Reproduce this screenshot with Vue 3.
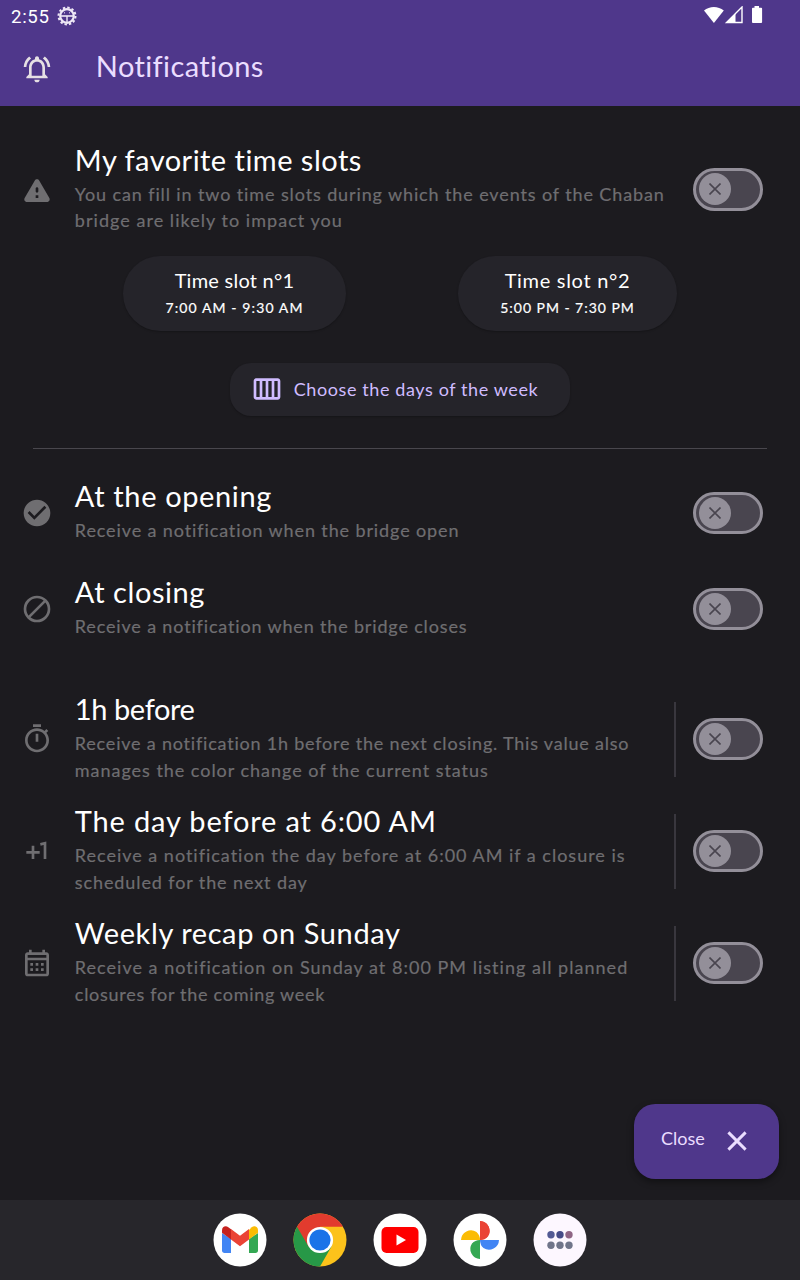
<script setup>
// Spreads the letters of a label so that it spans the given width.
const vSpan = {
  mounted(el, { value }) {
    const natural = el.getBoundingClientRect().width
    const count = el.textContent.length
    el.style.letterSpacing = `${(value - natural) / (count - 1)}px`
  },
}

const slots = [
  { name: 'Time slot n°1', nameW: 119.5, hours: '7:00 AM - 9:30 AM', hoursW: 137, size: 'wide' },
  { name: 'Time slot n°2', nameW: 125, hours: '5:00 PM - 7:30 PM', hoursW: 133.5, size: 'narrow' },
]

const favorite = {
  icon: 'warning', kind: 'favorite', title: 'My favorite time slots', w: 287,
  lines: [
    { t: 'You can fill in two time slots during which the events of the Chaban', w: 589 },
    { t: 'bridge are likely to impact you', w: 267 },
  ],
}
const rows = [
  { icon: 'check', kind: 'short', title: 'At the opening', w: 196.5, lines: [{ t: 'Receive a notification when the bridge open', w: 384 }] },
  { icon: 'block', kind: 'short', title: 'At closing', w: 129.5, lines: [{ t: 'Receive a notification when the bridge closes', w: 392 }] },
  {
    icon: 'timer', kind: 'tall first', bar: true, title: '1h before', w: 120,
    lines: [
      { t: 'Receive a notification 1h before the next closing. This value also', w: 554 },
      { t: 'manages the color change of the current status', w: 413 },
    ],
  },
  {
    icon: 'plus', kind: 'tall', bar: true, title: 'The day before at 6:00 AM', w: 361,
    lines: [
      { t: 'Receive a notification the day before at 6:00 AM if a closure is', w: 550 },
      { t: 'scheduled for the next day', w: 232 },
    ],
  },
  {
    icon: 'calendar', kind: 'tall', bar: true, title: 'Weekly recap on Sunday', w: 325,
    lines: [
      { t: 'Receive a notification on Sunday at 8:00 PM listing all planned', w: 553 },
      { t: 'closures for the coming week', w: 249.5 },
    ],
  },
]
const groups = [[favorite], rows]
</script>

<template>
  <div class="screen">
    <header class="header">
      <div class="status">
        <div class="status-left">
          <span v-span="38" class="clock">2:55</span>
          <svg class="gear" viewBox="0 0 20 20">
            <circle cx="10" cy="10" r="8.5" fill="none" stroke="#eee8f6" stroke-width="2" stroke-dasharray="2.4 2.05" />
            <circle cx="10" cy="10" r="6.8" fill="none" stroke="#eee8f6" stroke-width="2.2" />
            <path d="M4 10h12" stroke="#eee8f6" stroke-width="1.6" fill="none" />
            <path d="M10 10v6" stroke="#eee8f6" stroke-width="1.4" fill="none" />
            <path d="M7.500 6v1.500M12.500 6v1.500" stroke="#bcaedb" stroke-width="1" />
          </svg>
        </div>
        <svg class="signals" viewBox="0 0 60 20">
          <path d="M0 4.600C5.500-.2 14.200-.2 19.800 4.600L9.900 17z" fill="#fff" />
          <path d="M38 1v15.500H22.500z" fill="none" stroke="#fff" stroke-width="1.400" />
          <path d="M31 8v8.800h-8.800z" fill="#fff" />
          <path d="M31 8v8.800" stroke="#fff" stroke-width="1" />
          <path d="M50.500 0h4.500v1.700h2.200c.6 0 .9.4.9.9v13.500c0 .6-.4.900-.9.900h-8.300c-.6 0-.9-.4-.9-.9V2.600c0-.6.4-.9.9-.9h1.600z" fill="#fff" />
        </svg>
      </div>
      <div class="appbar">
        <svg class="icon bell" viewBox="0 0 24 24">
          <path d="M12 22c1.100 0 2-.9 2-2h-4c0 1.100.9 2 2 2zm6-6v-5c0-3.070-1.630-5.640-4.500-6.320V4c0-.83-.67-1.500-1.500-1.500s-1.500.67-1.500 1.500v.68C7.640 5.360 6 7.920 6 11v5l-2 2v1h16v-1l-2-2zm-2 1H8v-6c0-2.480 1.510-4.500 4-4.500s4 2.020 4 4.500v6zM7.580 4.080L6.150 2.650C3.750 4.480 2.170 7.300 2.030 10.500h2c.15-2.650 1.510-4.970 3.550-6.420zm12.390 6.420h2c-.15-3.200-1.730-6.020-4.120-7.850l-1.420 1.430c2.020 1.450 3.390 3.770 3.540 6.420z" />
        </svg>
        <h1><span v-span="168">Notifications</span></h1>
      </div>
    </header>

    <main class="content">
      <template v-for="(group, g) in groups" :key="g">
        <section v-for="row in group" :key="row.title" class="row" :class="row.kind">
          <svg class="icon" viewBox="0 0 24 24">
            <path v-if="row.icon === 'warning'" d="M4.470 21h15.060c1.540 0 2.500-1.670 1.730-3L13.730 4.990c-.77-1.330-2.690-1.330-3.460 0L2.740 18c-.77 1.330.19 3 1.730 3zM12 14c-.55 0-1-.45-1-1v-2c0-.55.45-1 1-1s1 .45 1 1v2c0 .55-.45 1-1 1zm1 4h-2v-2h2v2z" />
            <path v-else-if="row.icon === 'check'" d="M12 2C6.480 2 2 6.480 2 12s4.480 10 10 10 10-4.480 10-10S17.520 2 12 2zm-2 15l-5-5 1.410-1.410L10 14.170l7.590-7.590L19 8l-9 9z" />
            <g v-else-if="row.icon === 'block'" class="line">
              <circle cx="12" cy="12" r="9" />
              <path d="M5.700 18.300L18.300 5.700" />
            </g>
            <path v-else-if="row.icon === 'timer'" d="M15 1H9v2h6V1zm-4 13h2V8h-2v6zm8.030-6.610l1.420-1.420c-.43-.51-.9-.99-1.410-1.410l-1.420 1.420C16.070 4.740 14.120 4 12 4c-4.970 0-9 4.030-9 9s4.020 9 9 9 9-4.030 9-9c0-2.120-.74-4.070-1.970-5.610zM12 20c-3.870 0-7-3.130-7-7s3.130-7 7-7 7 3.130 7 7-3.130 7-7 7z" />
            <g v-else-if="row.icon === 'plus'" class="line">
              <path d="M9 8v10M4 13h10M18 18V6.200L14.500 7" />
            </g>
            <path v-else d="M19 4h-1V2h-2v2H8V2H6v2H5c-1.110 0-1.990.9-1.990 2L3 20c0 1.100.89 2 2 2h14c1.100 0 2-.9 2-2V6c0-1.100-.9-2-2-2zm0 16H5V10h14v10zm0-12H5V6h14v2zM9 14H7v-2h2v2zm4 0h-2v-2h2v2zm4 0h-2v-2h2v2zm-8 4H7v-2h2v2zm4 0h-2v-2h2v2zm4 0h-2v-2h2v2z" />
          </svg>
          <div class="text">
            <h2><span v-span="row.w">{{ row.title }}</span></h2>
            <p v-for="line in row.lines" :key="line.t"><span v-span="line.w">{{ line.t }}</span></p>
          </div>
          <i v-if="row.bar" class="bar"></i>
          <div class="toggle">
            <div class="thumb">
              <svg viewBox="0 0 12 12"><path d="M.5.5l11 11M11.500.5l-11 11" /></svg>
            </div>
          </div>
        </section>

        <template v-if="g === 0">
          <div class="slots">
            <div v-for="s in slots" :key="s.name" class="slot" :class="s.size">
              <div class="slot-name"><span v-span="s.nameW">{{ s.name }}</span></div>
              <div class="slot-hours"><span v-span="s.hoursW">{{ s.hours }}</span></div>
            </div>
          </div>
          <div class="days">
            <svg class="icon" viewBox="0 0 24 24">
              <path d="M20 4H4c-1.100 0-2 .9-2 2v12c0 1.100.9 2 2 2h16c1.100 0 2-.9 2-2V6c0-1.100-.9-2-2-2zM13 6h2.500v12H13V6zm-2 12H8.500V6H11v12zM4 6h2.500v12H4V6zm16 12h-2.500V6H20v12z" />
            </svg>
            <span v-span="244">Choose the days of the week</span>
          </div>
          <div class="rule"></div>
        </template>
      </template>
    </main>

    <div class="fab">
      <span v-span="46">Close</span>
      <svg viewBox="0 0 20 20"><path d="M1.400 1.400l17.200 17.200M18.600 1.400L1.400 18.600" /></svg>
    </div>

    <nav class="dock">
      <svg viewBox="0 0 54 54">
        <circle cx="27" cy="27" r="26.500" fill="#fff" />
        <path d="M9 20v17.500c0 1.500 1 2.500 2.500 2.500H18V26z" fill="#4285f4" />
        <path d="M36 26v14h6.500c1.500 0 2.500-1 2.500-2.500V20z" fill="#34a853" />
        <path d="M36 17v9.500l9-6.800v-2.500c0-3.500-3.600-5-6.300-3z" fill="#fbbc04" />
        <path d="M18 26.500V16l9 6.800 9-6.800v10.500l-9 6.800z" fill="#ea4335" />
        <path d="M9 17.200v2.500l9 6.800V16.300l-2.700-2.100c-2.700-2-6.300-.5-6.300 3z" fill="#c5221f" />
      </svg>
      <svg viewBox="0 0 54 54">
        <circle cx="27" cy="27" r="26.500" fill="#fcc21b" />
        <path d="M27 27L4.050 13.750A26.500 26.500 0 0 0 27 53.500L38.500 33.500z" fill="#279847" />
        <path d="M27 27L15.500 33.500 4.050 13.750A26.500 26.500 0 0 1 49.950 13.750H27z" fill="#e23b2e" />
        <circle cx="27" cy="27" r="13.100" fill="#fff" />
        <circle cx="27" cy="27" r="10.600" fill="#1a73e8" />
      </svg>
      <svg viewBox="0 0 54 54">
        <circle cx="27" cy="27" r="26.500" fill="#fff" />
        <rect x="8.500" y="14" width="37" height="26" rx="5" fill="#f00" />
        <path d="M23.500 21.500v11l9.500-5.500z" fill="#fff" />
      </svg>
      <svg viewBox="0 0 54 54">
        <circle cx="27" cy="27" r="26.500" fill="#fff" />
        <path d="M27 8a9.500 9.500 0 0 1 0 19z" fill="#ea4335" />
        <path d="M27 8a10 10 0 0 1 8 15.500Q32 27 27 27z" fill="#ea4335" />
        <path d="M8 27a10 10 0 0 1 15.500-8Q27 22 27 27z" fill="#fbbc04" />
        <path d="M46 27a10 10 0 0 1-15.500 8Q27 32 27 27z" fill="#4285f4" />
        <path d="M27 46a10 10 0 0 1-8-15.500Q22 27 27 27z" fill="#34a853" />
      </svg>
      <svg viewBox="0 0 54 54">
        <circle cx="27" cy="27" r="26.500" fill="#fdf7ff" />
        <circle cx="18" cy="21.700" r="3.700" fill="#525a94" />
        <circle cx="27" cy="21.700" r="3.700" fill="#454b87" />
        <circle cx="36" cy="21.700" r="3.700" fill="#8f6585" />
        <circle cx="18" cy="32.300" r="3.700" fill="#70758a" />
        <circle cx="27" cy="32.300" r="3.700" fill="#70758a" />
        <circle cx="36" cy="32.300" r="3.700" fill="#70758a" />
      </svg>
    </nav>
  </div>
</template>

<style>
body {
  background: #1c1b1f;
}
</style>

<style scoped>
.screen {
  position: relative;
  display: flex;
  flex-direction: column;
  width: 800px;
  height: 1280px;
  overflow: hidden;
  background: #1c1b1f;
  color: #fff;
  font-family: Lato, "Liberation Sans", sans-serif;
}
span {
  white-space: nowrap;
  display: inline-block;
}
h1, h2, p {
  margin: 0;
  font-weight: 400;
}
.header {
  height: 106.400px;
  flex: none;
  background: #4f378b;
}
.status {
  display: flex;
  justify-content: space-between;
  height: 32px;
  padding: 0 40px 0 11px;
}
.status-left {
  display: flex;
  align-items: center;
  gap: 7px;
}
.clock {
  font: 18.670px/32px Roboto, sans-serif;
  padding-top: 1px;
}
.gear {
  width: 20px;
  height: 20px;
}
.signals {
  width: 60px;
  height: 20px;
  margin-top: 6px;
  margin-right: -4px;
}
.icon {
  flex: none;
  width: 32px;
  height: 32px;
  fill: #6f6e71;
}
.appbar {
  display: flex;
  align-items: center;
  height: 74.670px;
  padding-left: 21.330px;
}
.bell {
  fill: #e6e0e4;
}
h1 {
  margin: -7px 0 0 42.500px;
  font-size: 29px;
  line-height: 36px;
  color: #eaddff;
}
.content {
  flex: 1;
  display: flex;
  flex-direction: column;
  padding-top: 26.930px;
}
.row {
  display: flex;
  align-items: center;
  padding: 0 37.330px 0 21.330px;
  height: 112px;
}
.row.short {
  height: 96px;
}
.row.first {
  margin-top: 26px;
}
.favorite .icon {
  margin-top: 1px;
}
.text {
  flex: 1;
  align-self: flex-start;
  padding: 8.500px 0 0 21.500px;
}
.short .text {
  padding-top: 13px;
}
.tall .text {
  padding-top: 8px;
}
h2 {
  font-size: 29px;
  line-height: 36px;
  margin-bottom: 3px;
}
p {
  height: 26.670px;
  font-size: 18px;
  line-height: 26.670px;
  color: #6f6e71;
  -webkit-text-stroke: 0.2px #6f6e71;
}
.line {
  fill: none;
  stroke: #6f6e71;
  stroke-width: 2;
}
.bar {
  width: 1.500px;
  height: 75px;
  margin-right: 17.500px;
  background: #39373e;
}
.toggle {
  box-sizing: border-box;
  display: flex;
  align-items: center;
  width: 69.330px;
  height: 42.670px;
  padding-left: 2.500px;
  border: 3px solid #938f99;
  border-radius: 22px;
  background: #49454f;
}
.thumb {
  display: flex;
  align-items: center;
  justify-content: center;
  width: 32px;
  height: 32px;
  border-radius: 50%;
  background: #938f99;
}
.thumb svg {
  width: 12px;
  height: 12px;
  stroke: #49454f;
  stroke-width: 1.600;
}
.slots {
  display: flex;
  justify-content: center;
  gap: 112px;
  margin-top: 10.700px;
}
.slot {
  box-sizing: border-box;
  height: 74.670px;
  padding-top: 10px;
  border-radius: 37.330px;
  background: #25242a;
  box-shadow: 0 1px 2px rgba(0, 0, 0, 0.25);
  text-align: center;
}
.wide {
  width: 223px;
}
.narrow {
  width: 219px;
}
.slot-name {
  height: 32px;
  font-size: 20px;
  line-height: 28px;
}
.slot-hours {
  font-size: 14px;
  line-height: 20px;
  -webkit-text-stroke: 0.2px #fff;
}
.days {
  box-sizing: border-box;
  align-self: center;
  display: flex;
  align-items: center;
  width: 340px;
  height: 53.330px;
  margin-top: 32px;
  padding-left: 20.700px;
  gap: 11px;
  border-radius: 21.330px;
  background: #25242a;
  box-shadow: 0 1px 2px rgba(0, 0, 0, 0.25);
  color: #d0bcff;
  font-size: 18px;
}
.days .icon {
  fill: #d0bcff;
}
.days span {
  margin-top: -1px;
}
.rule {
  height: 1.330px;
  margin: 31.700px 33px 16px;
  background: #49474d;
}
.fab {
  position: absolute;
  right: 21px;
  bottom: 101.500px;
  box-sizing: border-box;
  display: flex;
  align-items: center;
  width: 145px;
  height: 74.500px;
  padding-left: 27px;
  border-radius: 21.330px;
  background: #4f378b;
  box-shadow: 0 3px 7px rgba(0, 0, 0, 0.4);
  color: #eaddff;
  font-size: 18px;
}
.fab span {
  width: 46px;
  margin-top: -6px;
}
.fab svg {
  width: 20px;
  height: 20px;
  margin-left: 19.500px;
  stroke: #eaddff;
  stroke-width: 2.900;
}
.dock {
  flex: none;
  display: flex;
  align-items: center;
  justify-content: center;
  gap: 26px;
  height: 80px;
  background: #27262b;
}
.dock svg {
  width: 54px;
  height: 54px;
}
</style>
